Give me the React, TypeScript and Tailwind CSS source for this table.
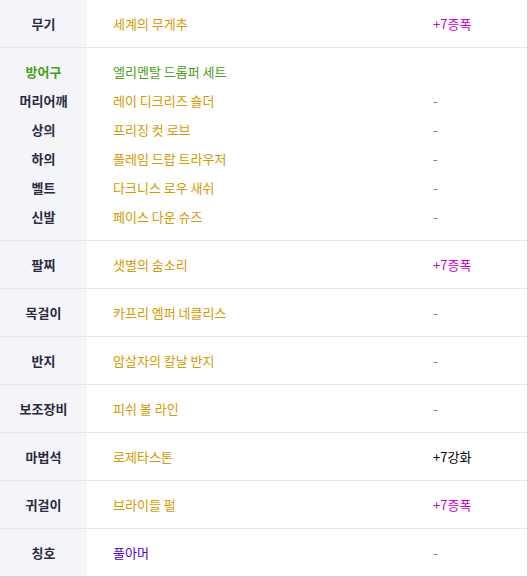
const gold = 'text-[#d49a00]'
const dash = 'text-[#77738f]'

type Row = { label: string; name: string; nameColor?: string; extra: string; extraColor?: string }

const head: Row = { label: '무기', name: '세계의 무게추', extra: '+7증폭', extraColor: 'text-[#d000d0]' }

const armor: Row[] = [
  { label: '방어구', name: '엘리멘탈 드롭퍼 세트', nameColor: 'text-[#47a01c]', extra: '' },
  { label: '머리어깨', name: '레이 디크리즈 숄더', extra: '-' },
  { label: '상의', name: '프리징 컷 로브', extra: '-' },
  { label: '하의', name: '플레임 드랍 트라우저', extra: '-' },
  { label: '벨트', name: '다크니스 로우 새쉬', extra: '-' },
  { label: '신발', name: '페이스 다운 슈즈', extra: '-' },
]

const rest: Row[] = [
  { label: '팔찌', name: '샛별의 숨소리', extra: '+7증폭', extraColor: 'text-[#d000d0]' },
  { label: '목걸이', name: '카프리 엠퍼 네클리스', extra: '-' },
  { label: '반지', name: '암살자의 칼날 반지', extra: '-' },
  { label: '보조장비', name: '피쉬 볼 라인', extra: '-' },
  { label: '마법석', name: '로제타스톤', extra: '+7강화', extraColor: 'text-black' },
  { label: '귀걸이', name: '브라이들 펄', extra: '+7증폭', extraColor: 'text-[#d000d0]' },
  { label: '칭호', name: '풀아머', nameColor: 'text-[#5200c8]', extra: '-' },
]

function Line({ row, h }: { row: Row; h: string }) {
  return (
    <div className={`flex items-center ${h}`}>
      <div
        className={`w-[87px] text-center font-bold ${row.label === '방어구' ? 'text-[#47a01c]' : 'text-[#2a2a40]'}`}
      >
        {row.label}
      </div>
      <div className={`w-[320px] pl-[26px] ${row.nameColor ?? gold}`}>{row.name}</div>
      <div className={`pl-[26px] ${row.extraColor ?? dash}`}>{row.extra}</div>
    </div>
  )
}

export default function App() {
  return (
    <div
      className="w-[528px] border-r border-b border-[#d0d0d4] bg-white text-[13px] leading-none"
      style={{ fontFamily: '"Noto Sans CJK KR", "Noto Sans", sans-serif' }}
    >
      <div className="bg-[linear-gradient(to_right,#f4f5f9_87px,white_87px)]">
        <div className="border-b border-[#e6e6ea]">
          <Line row={head} h="h-[47px]" />
        </div>
        <div className="border-b border-[#e6e6ea] py-[9px]">
          {armor.map(r => (
            <Line key={r.label} row={r} h="h-[29px]" />
          ))}
        </div>
        {rest.map((r, i) => (
          <div key={r.label} className={i < rest.length - 1 ? 'border-b border-[#e6e6ea]' : ''}>
            <Line row={r} h="h-[47px]" />
          </div>
        ))}
      </div>
    </div>
  )
}
